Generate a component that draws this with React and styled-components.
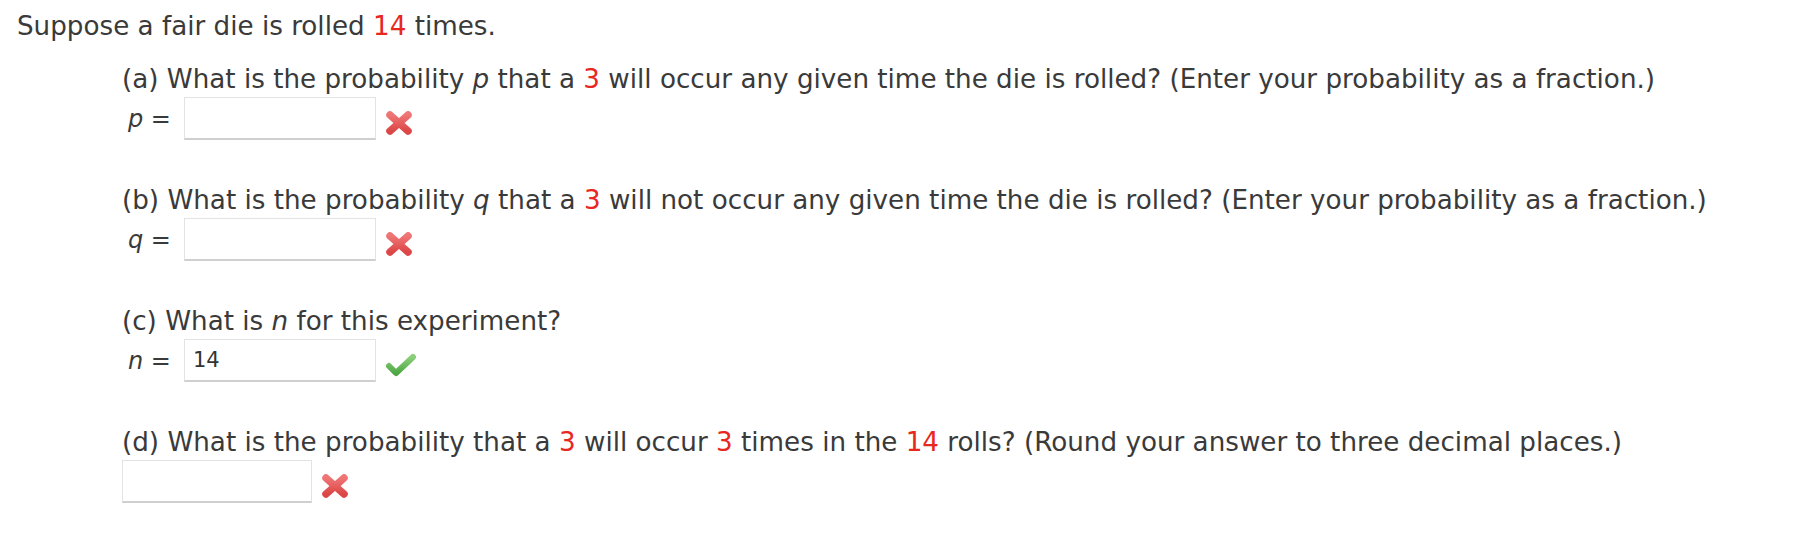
import React from "react";
import styled, { createGlobalStyle } from "styled-components";

const GlobalStyle = createGlobalStyle`
  body {
    margin: 0;
    background: #ffffff;
    font-family: "DejaVu Sans", Verdana, sans-serif;
    color: #3a3a3a;
  }
`;

export default function App() {
  return (
    <>
      <GlobalStyle />
      <Page>
        <Intro>
          Suppose a fair die is rolled <Red>14</Red> times.
        </Intro>

        <Part>
          <Question>
            (a) What is the probability <Var>p</Var> that a <Red>3</Red> will occur any given
            time the die is rolled? (Enter your probability as a fraction.)
          </Question>
          <AnswerRow>
            <Label>
              <Var>p</Var> =
            </Label>
            <AnswerBox />
            <WrongMark />
          </AnswerRow>
        </Part>

        <Part>
          <Question>
            (b) What is the probability <Var>q</Var> that a <Red>3</Red> will not occur any
            given time the die is rolled? (Enter your probability as a fraction.)
          </Question>
          <AnswerRow>
            <Label>
              <Var>q</Var> =
            </Label>
            <AnswerBox />
            <WrongMark />
          </AnswerRow>
        </Part>

        <Part>
          <Question>
            (c) What is <Var>n</Var> for this experiment?
          </Question>
          <AnswerRow>
            <Label>
              <Var>n</Var> =
            </Label>
            <AnswerBox>14</AnswerBox>
            <RightMark />
          </AnswerRow>
        </Part>

        <Part>
          <Question>
            (d) What is the probability that a <Red>3</Red> will occur <Red>3</Red> times in
            the <Red>14</Red> rolls? (Round your answer to three decimal places.)
          </Question>
          <AnswerRow>
            <AnswerBox $narrow />
            <WrongMark />
          </AnswerRow>
        </Part>
      </Page>
    </>
  );
}

function WrongMark() {
  return (
    <Mark width="28" height="26" viewBox="0 0 28 26">
      <defs>
        <linearGradient id="wrongFill" x1="0" y1="0" x2="0" y2="1">
          <stop offset="0" stopColor="#ef7676" />
          <stop offset="1" stopColor="#dc4646" />
        </linearGradient>
      </defs>
      <g stroke="url(#wrongFill)" strokeWidth="7.5" strokeLinecap="round">
        <line x1="5" y1="5" x2="23" y2="21" />
        <line x1="23" y1="5" x2="5" y2="21" />
      </g>
    </Mark>
  );
}

function RightMark() {
  return (
    <Mark width="32" height="26" viewBox="0 0 32 26">
      <defs>
        <linearGradient id="rightFill" x1="0" y1="0" x2="0" y2="1">
          <stop offset="0" stopColor="#8ccf7a" />
          <stop offset="1" stopColor="#4fa845" />
        </linearGradient>
      </defs>
      <polyline
        points="4,14 11,21 28,5"
        fill="none"
        stroke="url(#rightFill)"
        strokeWidth="6"
        strokeLinecap="round"
        strokeLinejoin="round"
      />
    </Mark>
  );
}

// Styled Components

const Page = styled.div`
  padding: 11px 0 0 17px;
  font-size: 26.2px;
  line-height: 30px;
`;

const Intro = styled.p`
  margin: 0 0 23px 0;
`;

const Red = styled.span`
  color: #e8271e;
`;

const Var = styled.i`
  font-style: italic;
`;

const Part = styled.section`
  margin: 0 0 45px 105px;
`;

const Question = styled.p`
  margin: 0;
`;

const AnswerRow = styled.div`
  display: flex;
  align-items: flex-end;
  margin-top: 3px;
`;

const Label = styled.span`
  box-sizing: border-box;
  width: 62px;
  padding-left: 6px;
  align-self: center;
  font-size: 24px;
`;

const AnswerBox = styled.div`
  box-sizing: border-box;
  width: ${(p) => (p.$narrow ? "190px" : "192px")};
  height: 43px;
  padding: 0 8px;
  display: flex;
  align-items: center;
  background: #fff;
  border: 1px solid #e3e3e3;
  border-bottom: 2px solid #cfcfcf;
  color: #333;
  font-size: 21px;
`;

const Mark = styled.svg`
  display: block;
  margin: 0 0 4px 9px;
`;
